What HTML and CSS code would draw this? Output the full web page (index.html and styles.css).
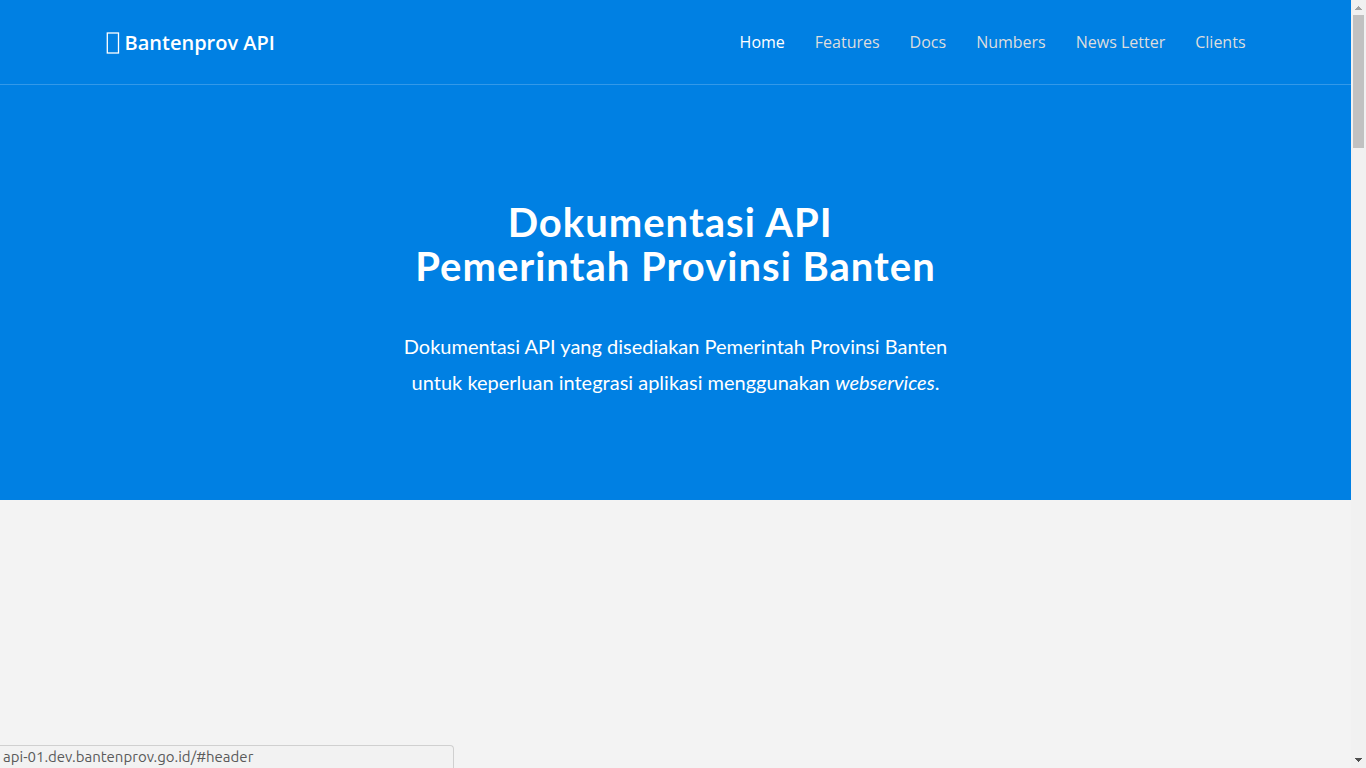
FILE: index.html
```html
<!DOCTYPE html>
<html lang="id">
<head>
<meta charset="utf-8">
<title>Bantenprov API</title>
<link rel="stylesheet" href="styles.css">
</head>
<body>
<div class="window">
  <div class="page">
    <header class="header" id="header">
      <div class="navbar">
        <div class="container">
          <a class="brand" href="#header"><svg class="brand-icon" width="14" height="22" viewBox="0 0 14 22" aria-hidden="true"><rect x="1.300" y="1" width="11.200" height="20" fill="none" stroke="#fff" stroke-width="1.300"/></svg>Bantenprov API</a>
          <nav class="menu">
            <a class="menu-link active" href="#header">Home</a>
            <a class="menu-link" href="#features">Features</a>
            <a class="menu-link" href="#docs">Docs</a>
            <a class="menu-link" href="#numbers">Numbers</a>
            <a class="menu-link" href="#newsletter">News Letter</a>
            <a class="menu-link" href="#clients">Clients</a>
          </nav>
        </div>
      </div>
      <div class="hero">
        <h1 class="title">Dokumentasi API&nbsp;<br>Pemerintah Provinsi Banten</h1>
        <p class="lead">Dokumentasi API yang disediakan Pemerintah Provinsi Banten<br>untuk keperluan integrasi aplikasi menggunakan <em>webservices</em>.</p>
      </div>
    </header>
  </div>
  <div class="scrollbar" aria-hidden="true">
    <svg class="arrow" width="15" height="15" viewBox="0 0 15 15" shape-rendering="crispEdges"><path d="M7 6h1v1h1v1h1v1h1v1H4V9h1V8h1V7h1z" fill="#a3a3a3"/></svg>
    <div class="thumb"></div>
    <svg class="arrow arrow-down" width="15" height="15" viewBox="0 0 15 15" shape-rendering="crispEdges"><path d="M4 5h7v1h-1v1H9v1H8v1H7V8H6V7H5V6H4z" fill="#505050"/></svg>
  </div>
  <div class="status">api-01.dev.bantenprov.go.id/#header</div>
</div>
</body>
</html>
```
FILE: styles.css
```css
* {
  box-sizing: border-box;
}

body {
  margin: 0;
  background: #f3f3f3;
  font-family: "Open Sans", sans-serif;
}

.window {
  display: flex;
  min-height: 100vh;
}

.page {
  flex: 1;
}

.header {
  background: #0080e3;
  color: #fff;
}

.navbar {
  border-bottom: 1px solid #3399e9;
}

.container {
  display: flex;
  justify-content: space-between;
  align-items: center;
  max-width: 1170px;
  margin: 0 auto;
  padding: 27px 15px;
}

.brand {
  display: flex;
  align-items: center;
  gap: 5px;
  padding-top: 2px;
  color: #fff;
  font-size: 20px;
  font-weight: 600;
  line-height: 28px;
  text-decoration: none;
}

.menu {
  display: flex;
  gap: 30px;
}

.menu-link {
  color: #dddddd;
  font-size: 16px;
  line-height: 28px;
  text-decoration: none;
}

.menu-link.active {
  color: #fff;
}

.hero {
  padding: 115px 15px 100px;
  font-family: Lato, sans-serif;
  text-align: center;
}

.title {
  margin: 0 0 40px;
  font-size: 40px;
  font-weight: 700;
  line-height: 44px;
  letter-spacing: 1px;
}

.lead {
  margin: 0;
  font-size: 20px;
  line-height: 36px;
}

.scrollbar {
  display: flex;
  flex-direction: column;
  width: 15px;
  background: #f1f1f1;
}

.arrow {
  display: block;
}

.arrow-down {
  margin-top: auto;
}

.thumb {
  height: 133px;
  margin: 0 2px;
  background: #c1c1c1;
}

.status {
  position: fixed;
  left: 0;
  bottom: 0;
  width: 454px;
  padding: 0 3px;
  border: 1px solid #d0d0d0;
  border-width: 1px 1px 0 0;
  border-top-right-radius: 4px;
  background: #f2f2f2;
  color: #5a5a5a;
  font-family: Ubuntu, "Noto Sans", sans-serif;
  font-size: 15px;
  line-height: 22px;
}
```
